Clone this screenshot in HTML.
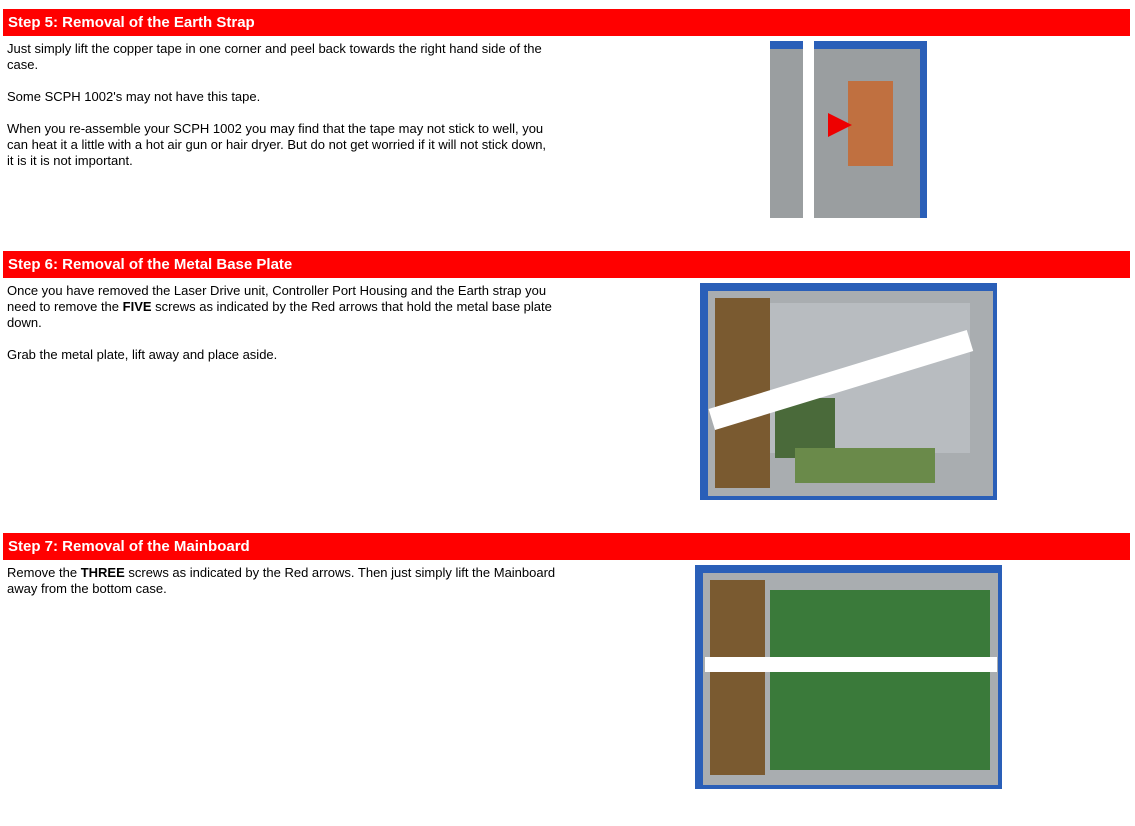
<!DOCTYPE html>
<html><head><style>
body{margin:0;background:#fff;font-family:"Liberation Sans",Arial,sans-serif;font-size:13px;color:#000;}
.bar{position:absolute;left:3px;width:1127px;height:27px;background:#f00;color:#fff;font-weight:bold;font-size:15px;line-height:27px;padding-left:5px;box-sizing:border-box;}
.t{position:absolute;left:7px;width:553px;line-height:16px;}
.t p{margin:0 0 16px 0;}
.img{position:absolute;background:#2a5fb8;overflow:hidden;}
.img div{position:absolute;}
</style></head><body>
<div class="bar" style="top:9px">Step 5: Removal of the Earth Strap</div>
<div class="t" style="top:41px"><p>Just simply lift the copper tape in one corner and peel back towards the right hand side of the case.</p><p>Some SCPH 1002's may not have this tape.</p><p>When you re-assemble your SCPH 1002 you may find that the tape may not stick to well, you can heat it a little with a hot air gun or hair dryer. But do not get worried if it will not stick down,<br>it is it is not important.</p></div>
<div class="img" style="left:770px;top:41px;width:157px;height:177px;">
<div style="left:0;top:8px;width:150px;height:169px;background:#9a9ea0"></div>
<div style="left:78px;top:40px;width:45px;height:85px;background:#c07040"></div>
<div style="left:58px;top:72px;width:0;height:0;border-top:12px solid transparent;border-bottom:12px solid transparent;border-left:24px solid #e00"></div>
<div style="left:33px;top:0;width:11px;height:177px;background:#fff"></div>
</div>
<div class="bar" style="top:251px">Step 6: Removal of the Metal Base Plate</div>
<div class="t" style="top:283px"><p>Once you have removed the Laser Drive unit, Controller Port Housing and the Earth strap you need to remove the <b>FIVE</b> screws as indicated by the Red arrows that hold the metal base plate down.</p><p>Grab the metal plate, lift away and place aside.</p></div>
<div class="img" style="left:700px;top:283px;width:297px;height:217px;">
<div style="left:8px;top:8px;width:285px;height:205px;background:#a9adb0"></div>
<div style="left:15px;top:15px;width:55px;height:190px;background:#7a5a30"></div>
<div style="left:70px;top:20px;width:200px;height:150px;background:#b8bcc0"></div>
<div style="left:75px;top:115px;width:60px;height:60px;background:#4a6a3a"></div>
<div style="left:95px;top:165px;width:140px;height:35px;background:#6a8a4a"></div>
<div style="left:15px;top:125px;width:270px;height:22px;background:#fff;transform:rotate(-17deg);transform-origin:0 100%"></div>
</div>
<div class="bar" style="top:533px">Step 7: Removal of the Mainboard</div>
<div class="t" style="top:565px"><p>Remove the <b>THREE</b> screws as indicated by the Red arrows. Then just simply lift the Mainboard away from the bottom case.</p></div>
<div class="img" style="left:695px;top:565px;width:307px;height:224px;">
<div style="left:8px;top:8px;width:295px;height:212px;background:#a9adb0"></div>
<div style="left:15px;top:15px;width:55px;height:195px;background:#7a5a30"></div>
<div style="left:75px;top:25px;width:220px;height:180px;background:#3a7a3a"></div>
<div style="left:10px;top:92px;width:292px;height:15px;background:#fff"></div>
</div>
</body></html>
